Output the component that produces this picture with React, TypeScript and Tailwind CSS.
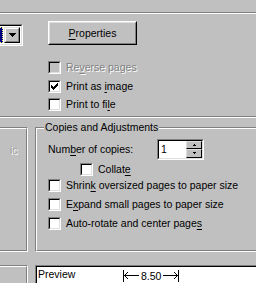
import React from "react";

const CheckMark = () => {
  const px: [number, number][] = [
    [6, 0],
    [5, 1], [6, 1],
    [0, 2], [4, 2], [5, 2], [6, 2],
    [0, 3], [1, 3], [3, 3], [4, 3], [5, 3],
    [0, 4], [1, 4], [2, 4], [3, 4], [4, 4],
    [1, 5], [2, 5], [3, 5],
    [2, 6],
  ];
  return (
    <svg width="7" height="7" viewBox="0 0 7 7" shapeRendering="crispEdges">
      {px.map(([x, y], i) => (
        <rect key={i} x={x} y={y} width="1" height="1" fill="#000" />
      ))}
    </svg>
  );
};

const Check = ({ checked = false, disabled = false }: { checked?: boolean; disabled?: boolean }) => (
  <div className="w-[13px] h-[13px] shrink-0 border border-t-[#808080] border-l-[#808080] border-r-white border-b-white">
    <div
      className={
        "w-full h-full flex items-center justify-center border border-t-black border-l-black border-r-[#dfdfdf] border-b-[#dfdfdf] " +
        (disabled ? "bg-[#c0c0c0]" : "bg-white")
      }
    >
      {checked && <CheckMark />}
    </div>
  </div>
);

const Row = ({
  children,
  checked,
  disabled,
  className = "",
}: {
  children: React.ReactNode;
  checked?: boolean;
  disabled?: boolean;
  className?: string;
}) => (
  <div className={"flex items-center gap-[5px] h-[13px] " + className}>
    <Check checked={checked} disabled={disabled} />
    <span
      className={
        "whitespace-nowrap leading-none " +
        (disabled ? "text-[#808080] [text-shadow:1px_1px_0_#ffffff]" : "text-black")
      }
    >
      {children}
    </span>
  </div>
);

const U = ({ children }: { children: React.ReactNode }) => (
  <span className="underline underline-offset-[2px] decoration-1">{children}</span>
);

const Etched = ({ className = "", children }: { className?: string; children?: React.ReactNode }) => (
  <div className={"border border-t-[#808080] border-l-[#808080] border-r-white border-b-white " + className}>
    <div className="w-full h-full border border-t-white border-l-white border-r-[#808080] border-b-[#808080] relative">
      {children}
    </div>
  </div>
);

export default function App() {
  return (
    <div
      className="w-[256px] h-[283px] overflow-hidden bg-[#c0c0c0] text-[10.5px] text-black flex flex-col"
      style={{ fontFamily: '"Liberation Sans", Arial, sans-serif' }}
    >
      {/* top etched line */}
      <div className="h-[12px] shrink-0" />
      <div className="h-[2px] shrink-0 border-t border-t-[#808080] border-b border-b-white" />

      {/* upper area */}
      <div className="h-[102px] shrink-0 flex">
        {/* combo */}
        <div className="mt-[10px] -ml-[100px] w-[123px] h-[22px] shrink-0 border border-t-[#808080] border-l-[#808080] border-r-white border-b-white">
          <div className="w-full h-full border border-t-black border-l-black border-r-[#dfdfdf] border-b-[#dfdfdf] bg-white flex p-[1px]">
            <div className="flex-1 bg-[#000080] border border-dotted border-[#ffff80]" />
            <div className="w-[16px] h-full ml-[1px] border border-t-[#dfdfdf] border-l-[#dfdfdf] border-r-black border-b-black">
              <div className="w-full h-full border border-t-white border-l-white border-r-[#808080] border-b-[#808080] bg-[#c0c0c0] flex items-center justify-center">
                <svg width="7" height="4" viewBox="0 0 7 4" shapeRendering="crispEdges">
                  <rect x="0" y="0" width="7" height="1" fill="#000" />
                  <rect x="1" y="1" width="5" height="1" fill="#000" />
                  <rect x="2" y="2" width="3" height="1" fill="#000" />
                  <rect x="3" y="3" width="1" height="1" fill="#000" />
                </svg>
              </div>
            </div>
          </div>
        </div>

        <div className="ml-[25px] flex flex-col">
          {/* Properties button */}
          <div className="mt-[7px] w-[89px] h-[24px] border border-t-white border-l-white border-r-black border-b-black">
            <div className="w-full h-full border border-t-[#dfdfdf] border-l-[#dfdfdf] border-r-[#808080] border-b-[#808080] flex items-center justify-center">
              <span className="leading-none">
                <U>P</U>roperties
              </span>
            </div>
          </div>

          <Row disabled className="mt-[16px]">
            Re<U>v</U>erse pages
          </Row>
          <Row checked className="mt-[6px]">
            Print as <U>i</U>mage
          </Row>
          <Row className="mt-[5px]">
            Print to fi<U>l</U>e
          </Row>
        </div>
      </div>

      {/* separator */}
      <div className="h-[2px] shrink-0 border-t border-t-[#808080] border-b border-b-white" />

      {/* group boxes */}
      <div className="mt-[9px] flex shrink-0">
        <Etched className="-ml-[10px] w-[38px] h-[125px] shrink-0">
          <div className="absolute left-[18px] top-[16px] text-[#a0a0a0] [text-shadow:1px_1px_0_#ffffff] whitespace-nowrap leading-none">
            ic
          </div>
        </Etched>

        <Etched className="ml-[7px] w-[240px] h-[125px] shrink-0">
          <div className="absolute left-[7px] -top-[9px] px-[1px] bg-[#c0c0c0] whitespace-nowrap leading-[14px]">
            Copies and Adjustments
          </div>
          <div className="pt-[10px] pl-[11px] flex flex-col">
            <div className="flex items-center h-[21px]">
              <span className="w-[109px] whitespace-nowrap leading-none">
                Num<U>b</U>er of copies:
              </span>
              <div className="w-[47px] h-[21px] border border-t-[#808080] border-l-[#808080] border-r-white border-b-white">
                <div className="w-full h-full border border-t-black border-l-black border-r-[#dfdfdf] border-b-[#dfdfdf] bg-white flex">
                  <span className="flex-1 pl-[2px] leading-[17px]">1</span>
                  <div className="w-[16px] flex flex-col">
                    <div className="h-[9px] border border-t-[#dfdfdf] border-l-[#dfdfdf] border-r-black border-b-black bg-[#c0c0c0] flex items-center justify-center">
                      <svg width="5" height="3" viewBox="0 0 5 3" shapeRendering="crispEdges">
                        <rect x="2" y="0" width="1" height="1" fill="#000" />
                        <rect x="1" y="1" width="3" height="1" fill="#000" />
                      </svg>
                    </div>
                    <div className="h-[10px] border border-t-[#dfdfdf] border-l-[#dfdfdf] border-r-black border-b-black bg-[#c0c0c0] flex items-center justify-center">
                      <svg width="5" height="3" viewBox="0 0 5 3" shapeRendering="crispEdges">
                        <rect x="1" y="0" width="3" height="1" fill="#000" />
                        <rect x="2" y="1" width="1" height="1" fill="#000" />
                      </svg>
                    </div>
                  </div>
                </div>
              </div>
            </div>

            <Row className="mt-[3px] ml-[32px]">
              Collat<U>e</U>
            </Row>
            <Row className="mt-[3px]">
              Shrin<U>k</U> oversized pages to paper size
            </Row>
            <Row className="mt-[6px]">
              E<U>x</U>pand small pages to paper size
            </Row>
            <Row className="mt-[6px]">
              Auto-rotate and center page<U>s</U>
            </Row>
          </div>
        </Etched>
      </div>

      {/* bottom row */}
      <div className="mt-[13px] flex shrink-0">
        <Etched className="-ml-[10px] w-[38px] h-[40px] shrink-0" />
        <div className="ml-[7px] w-[240px] h-[40px] shrink-0 border border-t-[#808080] border-l-[#808080] border-r-white border-b-white">
          <div className="w-full h-full border border-t-black border-l-black border-r-[#dfdfdf] border-b-[#dfdfdf] bg-white relative">
            <div className="absolute left-[1px] top-[2px] leading-none">Preview</div>
            <div className="absolute left-[86px] top-[3px] flex items-center leading-none">
              <svg width="16" height="12" viewBox="0 0 16 12" shapeRendering="crispEdges">
                <rect x="0" y="0" width="1" height="12" fill="#000" />
                <rect x="1" y="5" width="15" height="1" fill="#000" />
                <path d="M1.5 5.5 L5 2 M1.5 5.5 L5 9" stroke="#000" strokeWidth="1" fill="none" />
              </svg>
              <span className="mx-[2px]">8.50</span>
              <svg width="16" height="12" viewBox="0 0 16 12" shapeRendering="crispEdges">
                <rect x="15" y="0" width="1" height="12" fill="#000" />
                <rect x="0" y="5" width="15" height="1" fill="#000" />
                <path d="M14.5 5.5 L11 2 M14.5 5.5 L11 9" stroke="#000" strokeWidth="1" fill="none" />
              </svg>
            </div>
          </div>
        </div>
      </div>
    </div>
  );
}
